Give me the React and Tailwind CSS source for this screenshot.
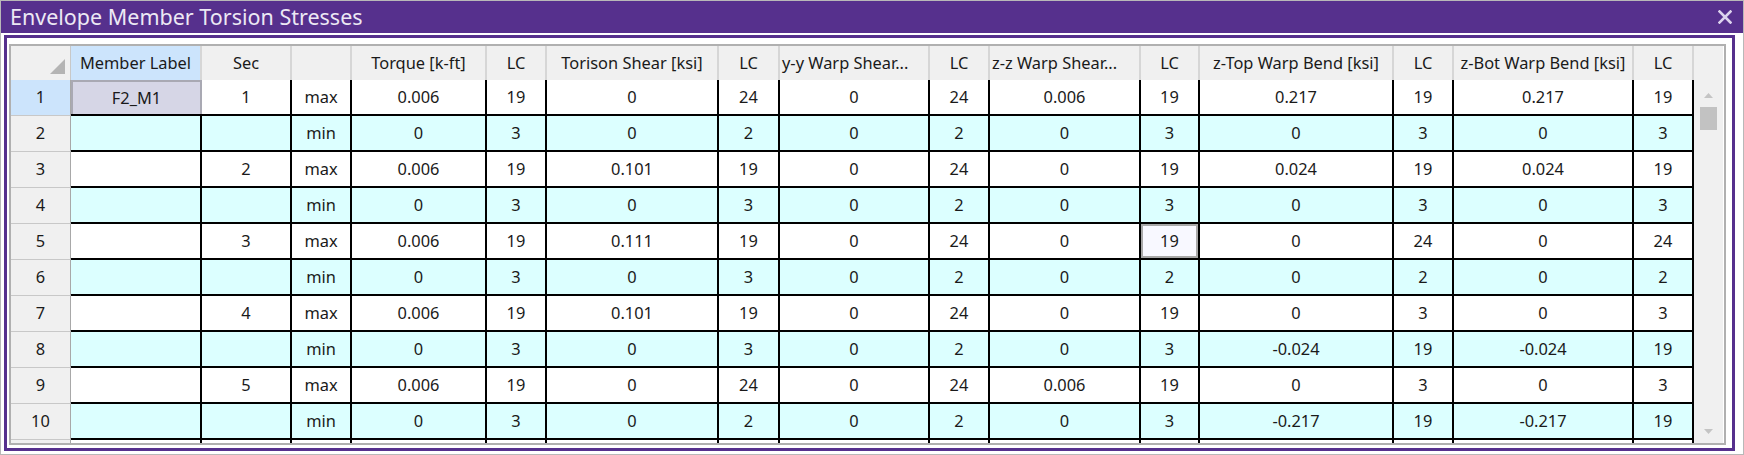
import React from "react";

const COLS = [
  "w-[60px]",
  "w-[131px]",
  "w-[90px]",
  "w-[60px]",
  "w-[135px]",
  "w-[60px]",
  "w-[172px]",
  "w-[61px]",
  "w-[150px]",
  "w-[60px]",
  "w-[151px]",
  "w-[59px]",
  "w-[194px]",
  "w-[60px]",
  "w-[180px]",
  "w-[60px]",
];

const HEADERS = [
  "",
  "Member Label",
  "Sec",
  "",
  "Torque [k-ft]",
  "LC",
  "Torison Shear [ksi]",
  "LC",
  "y-y Warp Shear...",
  "LC",
  "z-z Warp Shear...",
  "LC",
  "z-Top Warp Bend [ksi]",
  "LC",
  "z-Bot Warp Bend [ksi]",
  "LC",
];

const ROWS = [
  ["F2_M1", "1", "max", "0.006", "19", "0", "24", "0", "24", "0.006", "19", "0.217", "19", "0.217", "19"],
  ["", "", "min", "0", "3", "0", "2", "0", "2", "0", "3", "0", "3", "0", "3"],
  ["", "2", "max", "0.006", "19", "0.101", "19", "0", "24", "0", "19", "0.024", "19", "0.024", "19"],
  ["", "", "min", "0", "3", "0", "3", "0", "2", "0", "3", "0", "3", "0", "3"],
  ["", "3", "max", "0.006", "19", "0.111", "19", "0", "24", "0", "19", "0", "24", "0", "24"],
  ["", "", "min", "0", "3", "0", "3", "0", "2", "0", "2", "0", "2", "0", "2"],
  ["", "4", "max", "0.006", "19", "0.101", "19", "0", "24", "0", "19", "0", "3", "0", "3"],
  ["", "", "min", "0", "3", "0", "3", "0", "2", "0", "3", "-0.024", "19", "-0.024", "19"],
  ["", "5", "max", "0.006", "19", "0", "24", "0", "24", "0.006", "19", "0", "3", "0", "3"],
  ["", "", "min", "0", "3", "0", "2", "0", "2", "0", "3", "-0.217", "19", "-0.217", "19"],
];

function HeaderRow() {
  return (
    <div className="flex h-[34px] bg-[#f0f0f0] shrink-0">
      {HEADERS.map((h, i) => {
        if (i === 0) {
          return (
            <div key={i} className={`${COLS[0]} h-full relative border-r border-[#c8c8c8]`}>
              <svg className="absolute right-[5px] bottom-[6px]" width="15" height="15" viewBox="0 0 15 15">
                <polygon points="15,0 15,15 0,15" fill="#b4b4b4" />
              </svg>
            </div>
          );
        }
        const selected = i === 1;
        const trunc = i === 8 || i === 10;
        return (
          <div
            key={i}
            className={`${COLS[i]} h-full flex items-center border-r-2 border-[#d6d6d6] whitespace-nowrap overflow-hidden ${
              trunc ? "justify-start pl-[2px]" : "justify-center"
            } ${selected ? "bg-[#cce4fc]" : ""}`}
          >
            {h}
          </div>
        );
      })}
    </div>
  );
}

function DataRow({ idx, cells, label }) {
  const even = idx % 2 === 1;
  const rowBg = even ? "bg-[#dcffff]" : "bg-white";
  return (
    <div className="flex h-[36px] shrink-0">
      <div
        className={`${COLS[0]} h-full flex items-center justify-center border-b border-[#c8c8c8] border-r border-r-[#a8a8a8] ${
          idx === 0 ? "bg-[#cce4fc]" : "bg-[#f0f0f0]"
        }`}
      >
        {label}
      </div>
      {cells.map((c, j) => {
        const col = j + 1;
        const selLabel = idx === 0 && col === 1;
        const selLC = idx === 4 && col === 11;
        if (selLabel) {
          return (
            <div key={j} className={`${COLS[col]} h-full border-b-2 border-black bg-white`}>
              <div className="h-full w-full flex items-center justify-center bg-[#d6d6e6] border-2 border-[#a9a9b3] border-b-0">
                {c}
              </div>
            </div>
          );
        }
        if (selLC) {
          return (
            <div key={j} className={`${COLS[col]} h-full border-b-2 border-r-2 border-black ${rowBg}`}>
              <div className="h-full w-full flex items-center justify-center bg-[#f8f8ff] border-2 border-[#a8a8a8]">
                {c}
              </div>
            </div>
          );
        }
        return (
          <div
            key={j}
            className={`${COLS[col]} h-full flex items-center justify-center border-r-2 border-b-2 border-black ${rowBg}`}
          >
            {c}
          </div>
        );
      })}
    </div>
  );
}

const EMPTY = ["", "", "", "", "", "", "", "", "", "", "", "", "", "", ""];

export default function App() {
  return (
    <div
      className="w-[1744px] h-[455px] border border-[#b8b8b8] bg-white flex flex-col overflow-hidden text-[#1a1a1a]"
      style={{ fontFamily: '"Noto Sans", "Open Sans", sans-serif' }}
    >
      <div className="h-[32px] shrink-0 bg-[#56308d] flex items-center justify-between pl-[9px] pr-[11px]">
        <span className="text-[#ece8f4] text-[21.5px] leading-none">Envelope Member Torsion Stresses</span>
        <svg width="14" height="14" viewBox="0 0 14 14">
          <path d="M1.5 1.5 L12.5 12.5 M12.5 1.5 L1.5 12.5" stroke="#ddd4ee" strokeWidth="2.6" strokeLinecap="square" />
        </svg>
      </div>
      <div className="flex-1 min-h-0 pt-[2px] pl-[3px] pr-[8px] pb-[3px]">
        <div className="h-full border-[3px] border-[#56308d] pt-[6px] pl-[2px] pr-[6px] pb-[3px]">
          <div className="h-full border-2 border-[#b0b0b0] flex overflow-hidden text-[16.4px]">
            <div className="w-[1683px] shrink-0 flex flex-col overflow-hidden">
              <HeaderRow />
              {ROWS.map((r, i) => (
                <DataRow key={i} idx={i} cells={r} label={i + 1} />
              ))}
              <DataRow idx={10} cells={EMPTY} label="" />
            </div>
            <div className="w-[29px] shrink-0 flex flex-col">
              <div className="h-[34px] shrink-0 bg-[#f0f0f0]" />
              <div className="flex-1 bg-[#f0f0f0] flex flex-col items-center">
                <svg className="mt-[13px]" width="9" height="5" viewBox="0 0 9 5">
                  <polygon points="4.5,0 9,5 0,5" fill="#c4c4c4" />
                </svg>
                <div className="mt-[9px] w-[17px] h-[23px] bg-[#c2c2c2]" />
                <div className="flex-1" />
                <svg className="mb-[9px]" width="9" height="5" viewBox="0 0 9 5">
                  <polygon points="0,0 9,0 4.5,5" fill="#c4c4c4" />
                </svg>
              </div>
            </div>
          </div>
        </div>
      </div>
    </div>
  );
}
